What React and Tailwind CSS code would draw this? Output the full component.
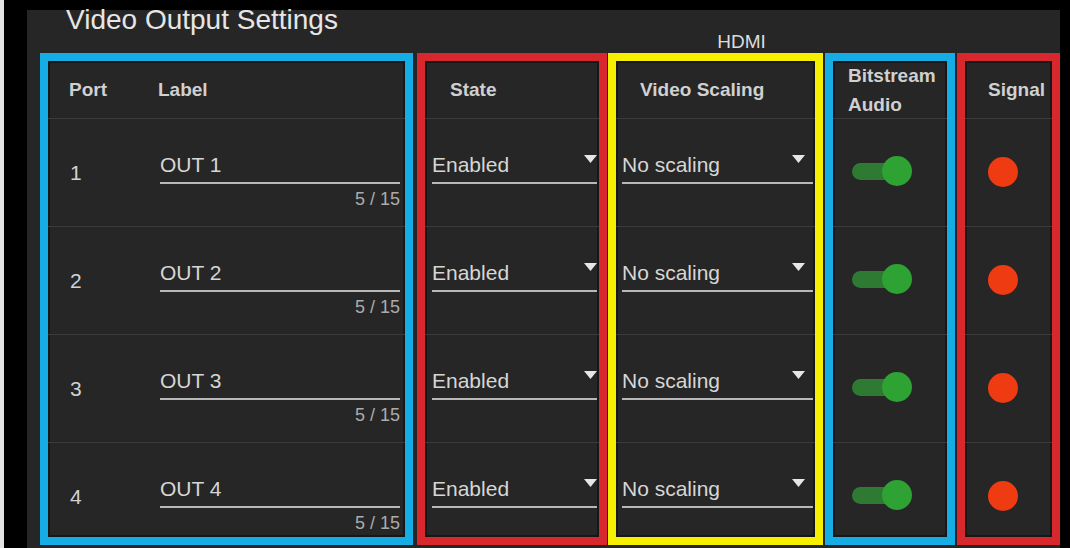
import React from 'react';

const ports = [1, 2, 3, 4];

function rowClass(i) {
  return i < 3 ? 'h-[108px] border-b border-[#3a3a3a]' : 'h-[94px]';
}

function Arrow({ className }) {
  return (
    <svg width="13" height="8" viewBox="0 0 13 8" className={className}>
      <polygon points="0,0 13,0 6.5,8" fill="#e6e6e6" />
    </svg>
  );
}

function Select({ value, arrowClass, className }) {
  return (
    <div className={className}>
      <div className="flex items-start justify-between border-b-2 border-[#b8b8b8] pb-[5px]">
        <span className="text-[21px] leading-[24px] text-[#d6d6d6]">{value}</span>
        <Arrow className={arrowClass} />
      </div>
    </div>
  );
}

export default function App() {
  return (
    <div className="h-[548px] w-[1070px] overflow-hidden bg-black border-l-4 border-[#e4e4e4] pl-[23px] pr-[10px] pt-[10px] font-['Liberation_Sans',Arial,sans-serif] text-[#d2d2d2]">
      <div className="h-[538px] bg-[#262626] pl-[13px]">
        <div className="flex h-[43px]">
          <div className="w-[373px] pl-[26px] text-[28px] leading-[20px] text-[#e6e6e6]">
            Video Output Settings
          </div>
          <div className="flex-1 pl-[10px] pt-[22px] text-center text-[19px] leading-[19px] text-[#dcdcdc]">
            HDMI
          </div>
        </div>

        <div className="flex">
          {/* Port + Label */}
          <div className="flex h-[492px] w-[373px] flex-col border-[8px] border-[#16ade6] shadow-[inset_0_0_0_2px_#171717]">
            <div className="flex h-[58px] items-center border-b border-[#3a3a3a] text-[19px] font-bold leading-[19px] text-[#d0d0d0]">
              <div className="w-[110px] pl-[21px]">Port</div>
              <div>Label</div>
            </div>
            {ports.map((p, i) => (
              <div key={p} className={'flex ' + rowClass(i)}>
                <div className="w-[110px] pl-[22px] pt-[42px] text-[21px] leading-[24px]">{p}</div>
                <div className="flex-1 pl-[2px] pr-[5px] pt-[34px]">
                  <div className="border-b-2 border-[#b8b8b8] pb-[5px] text-[21px] leading-[24px] text-[#d6d6d6]">
                    OUT {p}
                  </div>
                  <div className="mt-[5px] text-right text-[18px] leading-[20px] text-[#ababab]">5 / 15</div>
                </div>
              </div>
            ))}
          </div>

          {/* State */}
          <div className="ml-[4px] flex h-[492px] w-[190px] flex-col border-[8px] border-[#d8282e] shadow-[inset_0_0_0_2px_#171717]">
            <div className="flex h-[58px] items-center border-b border-[#3a3a3a] pl-[25px] text-[19px] font-bold leading-[19px] text-[#d0d0d0]">
              State
            </div>
            {ports.map((p, i) => (
              <div key={p} className={rowClass(i)}>
                <Select value="Enabled" className="pl-[7px] pr-[2px] pt-[34px]" arrowClass="mt-[2px]" />
              </div>
            ))}
          </div>

          {/* Video Scaling */}
          <div className="ml-[1px] flex h-[492px] w-[215px] flex-col border-[8px] border-[#f6f000] shadow-[inset_0_0_0_2px_#171717]">
            <div className="flex h-[58px] items-center border-b border-[#3a3a3a] pl-[24px] text-[19px] font-bold leading-[19px] text-[#d0d0d0]">
              Video Scaling
            </div>
            {ports.map((p, i) => (
              <div key={p} className={rowClass(i)}>
                <Select value="No scaling" className="pl-[6px] pr-[2px] pt-[34px]" arrowClass="mt-[2px] mr-[8px]" />
              </div>
            ))}
          </div>

          {/* Bitstream Audio */}
          <div className="ml-[2px] flex h-[492px] w-[130px] flex-col border-[8px] border-[#16ade6] shadow-[inset_0_0_0_2px_#171717]">
            <div className="flex h-[58px] items-center border-b border-[#3a3a3a] pl-[15px] text-[19px] font-bold leading-[29px] text-[#d0d0d0]">
              <div>
                Bitstream
                <br />
                Audio
              </div>
            </div>
            {ports.map((p, i) => (
              <div key={p} className={rowClass(i)}>
                <div className="flex h-[30px] items-center pl-[19px] mt-[37px]">
                  <div className="h-[17px] w-[48px] rounded-full bg-[#2f7a33]" />
                  <div className="-ml-[18px] h-[30px] w-[30px] rounded-full bg-[#2ea232]" />
                </div>
              </div>
            ))}
          </div>

          {/* Signal */}
          <div className="ml-[2px] flex h-[492px] w-[103px] flex-col border-[8px] border-[#d8282e] shadow-[inset_0_0_0_2px_#171717]">
            <div className="flex h-[58px] items-center border-b border-[#3a3a3a] pl-[23px] text-[19px] font-bold leading-[19px] text-[#d0d0d0]">
              Signal
            </div>
            {ports.map((p, i) => (
              <div key={p} className={rowClass(i)}>
                <div className="ml-[23px] mt-[38px] h-[30px] w-[30px] rounded-full bg-[#ef3b12]" />
              </div>
            ))}
          </div>
        </div>
      </div>
    </div>
  );
}
